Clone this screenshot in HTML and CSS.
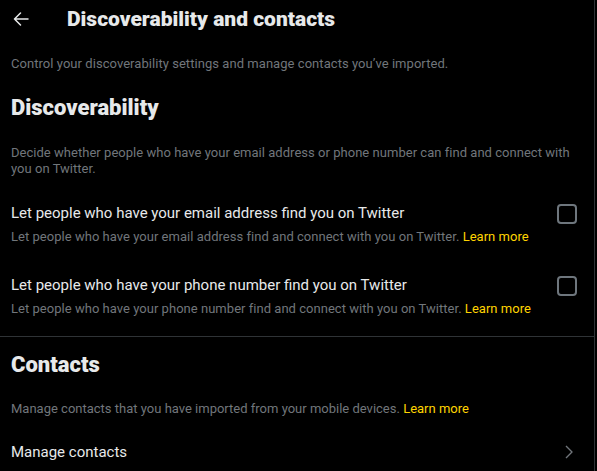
FILE: index.html
```html
<!DOCTYPE html>
<html lang="en">
<head>
<meta charset="utf-8">
<title>Discoverability and contacts</title>
<link rel="stylesheet" href="styles.css">
</head>
<body>
<main class="column">
  <header class="topbar">
    <span class="back" aria-label="Back">
      <svg viewBox="0 0 16 14" width="16" height="14" aria-hidden="true"><path d="M15 7H1.5M7.5 1L1.5 7l6 6" fill="none" stroke="#e7e9ea" stroke-width="1.5" stroke-linecap="round" stroke-linejoin="round"/></svg>
    </span>
    <h1 class="title">Discoverability and contacts</h1>
  </header>

  <p class="intro">Control your discoverability settings and manage contacts you’ve imported.</p>

  <section class="section">
    <h2 class="heading">Discoverability</h2>
    <p class="desc">Decide whether people who have your email address or phone number can find and connect with you on Twitter.</p>
    <div class="items">
      <label class="item">
        <div class="item-text">
          <div class="item-title">Let people who have your email address find you on Twitter</div>
          <div class="item-sub">Let people who have your email address find and connect with you on Twitter. <a class="link" href="#">Learn more</a></div>
        </div>
        <span class="check"></span>
      </label>
      <label class="item">
        <div class="item-text">
          <div class="item-title">Let people who have your phone number find you on Twitter</div>
          <div class="item-sub">Let people who have your phone number find and connect with you on Twitter. <a class="link" href="#">Learn more</a></div>
        </div>
        <span class="check"></span>
      </label>
    </div>
  </section>

  <section class="section contacts">
    <h2 class="heading">Contacts</h2>
    <p class="desc desc-contacts">Manage contacts that you have imported from your mobile devices. <a class="link" href="#">Learn more</a></p>
    <a class="row" href="#">
      <span class="row-label">Manage contacts</span>
      <svg class="chev" viewBox="0 0 8 14" width="8" height="14" aria-hidden="true"><path d="M1 1l6 6-6 6" fill="none" stroke="#71767b" stroke-width="1.4" stroke-linejoin="round"/></svg>
    </a>
  </section>
</main>
</body>
</html>
```
FILE: styles.css
```css
* { box-sizing: border-box; }
html, body { margin: 0; padding: 0; background: #000; }
body {
  font-family: Roboto, "Noto Sans", "Liberation Sans", sans-serif;
  color: #e7e9ea;
  height: 471px;
  overflow: hidden;
}
.column {
  width: 595px;
  min-height: 471px;
  border-right: 1px solid #2f3336;
}
.topbar {
  height: 37px;
  display: flex;
  align-items: center;
  padding-left: 13px;
}
.back {
  display: flex;
  width: 16px;
  height: 14px;
  margin-right: 38px;
}
.title {
  margin: 0;
  font-size: 21px;
  font-weight: 900;
  line-height: 24px;
  color: #e7e9ea;
}
.intro {
  margin: 19px 0 0;
  padding: 0 11px;
  font-size: 13px;
  line-height: 16px;
  letter-spacing: 0.05px;
  color: #71767b;
}
.heading {
  margin: 0;
  padding: 0 11px;
  font-size: 22px;
  font-weight: 900;
  line-height: 24px;
  color: #e7e9ea;
}
.section { padding-top: 24px; }
.desc {
  margin: 25px 0 0;
  padding: 0 11px;
  font-size: 13px;
  line-height: 16px;
  letter-spacing: 0.03px;
  color: #71767b;
}
.items { padding-top: 12px; padding-bottom: 3px; border-bottom: 1px solid #2f3336; }
.item {
  display: flex;
  justify-content: space-between;
  align-items: flex-start;
  padding: 12px 17px 12px 11px;
}
.item-title {
  font-size: 15px;
  line-height: 24px;
  color: #e7e9ea;
}
.item-sub {
  font-size: 13px;
  line-height: 24px;
  letter-spacing: 0.03px;
  color: #71767b;
}
.link { color: #ffd400; text-decoration: none; }
.check {
  flex: none;
  width: 20px;
  height: 20px;
  margin-top: 3px;
  border: 2px solid #6e767d;
  border-radius: 4px;
}
.contacts { padding-top: 16px; }
.desc-contacts { margin-top: 24px; letter-spacing: 0; }
.row {
  display: flex;
  justify-content: space-between;
  align-items: center;
  margin-top: 23px;
  padding: 0 21px 0 11px;
  height: 24px;
  text-decoration: none;
}
.row-label {
  font-size: 15px;
  line-height: 24px;
  color: #e7e9ea;
}
.chev { display: block; }
```
